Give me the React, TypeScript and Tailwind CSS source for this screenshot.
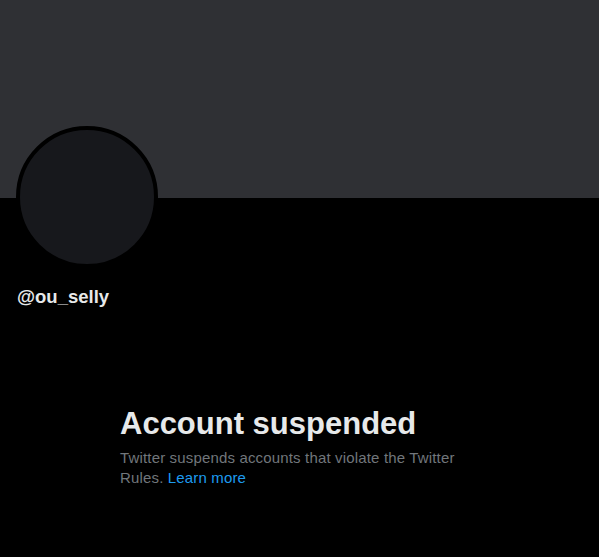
export default function App() {
  return (
    <div className="min-h-screen bg-black font-['Liberation_Sans',Arial,sans-serif]">
      <div className="h-[198px] bg-[#2f3034]" />
      <div className="px-4">
        <div className="-mt-[72px] w-[142px] h-[142px] rounded-full border-4 border-black bg-[#17181c]" />
        <div className="mt-[17px] ml-px text-[18.5px] leading-6 font-bold text-[#e7e9ea]">@ou_selly</div>
      </div>
      <div className="ml-[120px] mt-[97px] w-[345px]">
        <h2 className="text-[31px] leading-9 font-extrabold text-[#e7e9ea]">Account suspended</h2>
        <p className="mt-[6px] text-[15px] leading-5 tracking-[0.16px] text-[#71767b]">
          Twitter suspends accounts that violate the Twitter Rules.{" "}
          <a href="#" className="text-[#1d9bf0]">Learn more</a>
        </p>
      </div>
    </div>
  );
}
